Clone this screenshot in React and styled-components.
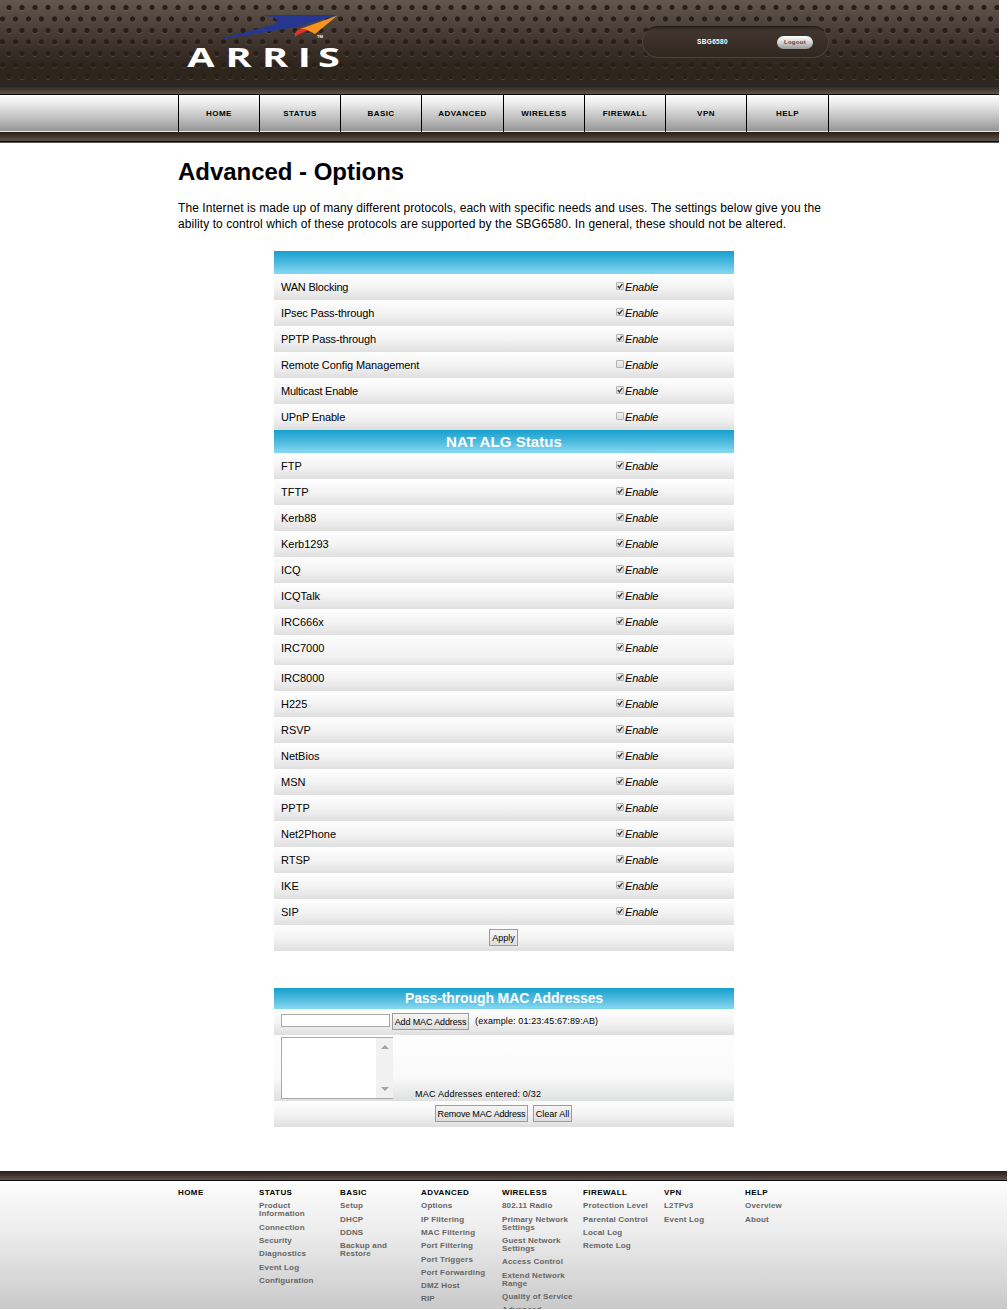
import React from "react";
import styled, { createGlobalStyle } from "styled-components";

const GlobalStyle = createGlobalStyle`
  *, *::before, *::after { box-sizing: border-box; }
  body { margin: 0; background: #fff; color: #000; font-family: "Liberation Sans", Arial, sans-serif; }
`;

const Page = styled.div`
  width: 1008px;
  height: 1310px;
  overflow: hidden;
`;

const Header = styled.header`
  width: 999px;
`;

const Banner = styled.div`
  height: 84px;
  padding: 0 170px 0 178px;
  display: flex;
  justify-content: space-between;
  background:
    radial-gradient(circle at 9px 7.5px, #271f18 2.2px, rgba(39, 31, 24, 0) 3px) 0 0 / 13px 23px,
    radial-gradient(circle at 2.5px 19px, #271f18 2.2px, rgba(39, 31, 24, 0) 3px) 0 0 / 13px 23px,
    radial-gradient(circle at 9px 8.5px, rgba(104, 92, 80, 0.5) 2.1px, rgba(104, 92, 80, 0) 3px) 0 0 / 13px 23px,
    radial-gradient(circle at 2.5px 20px, rgba(104, 92, 80, 0.5) 2.1px, rgba(104, 92, 80, 0) 3px) 0 0 / 13px 23px,
    linear-gradient(#61574e 0, #4f453e 22px, #3a3029 48px, #2e251d 66px, #2e251e 84px);
`;

const Band = styled.div`
  height: ${(p) => p.$height}px;
  background: linear-gradient(#261e17, #3c332c 40%, #5e544b);
  border-top: ${(p) => (p.$topLine ? `1px solid ${p.$topLine}` : "0")};
  border-bottom: 1px solid #0c0908;
`;

const HeaderEdge = styled.div`
  height: 1px;
  background: #55565a;
`;

const Logo = styled.svg`
  display: block;
  width: 170px;
  height: 80px;
`;

const StatusPill = styled.div`
  margin-top: 26px;
  width: 187px;
  height: 32px;
  padding: 0 15px 0 54px;
  display: flex;
  align-items: center;
  justify-content: space-between;
  border-radius: 16px;
  border: 1px solid #4d433a;
  border-top-color: #221b15;
  background: linear-gradient(#332a24, #40362f 15%, #30271f);
`;

const Model = styled.span`
  color: #fff;
  font-size: 6.5px;
  font-weight: bold;
  letter-spacing: 0.35px;
  line-height: 8px;
`;

const Logout = styled.button`
  width: 36px;
  height: 13px;
  padding: 0;
  border: 0;
  border-radius: 7px;
  background: linear-gradient(#fff, #d8d8d8 45%, #999);
  color: #60452c;
  font: bold 6px/13px "Liberation Sans", Arial, sans-serif;
  letter-spacing: 0.3px;
`;

const Nav = styled.nav`
  height: 37px;
  padding-left: 178px;
  display: flex;
  background: linear-gradient(#fdfdfd, #e9e9e9 25%, #c8c8c8 55%, #969696 97%, #e8e8e3 97.5%);
`;

const NavItem = styled.a`
  width: ${(p) => p.$width}px;
  border-left: 1px solid #000;
  text-align: center;
  font-size: 8px;
  font-weight: bold;
  line-height: 37px;
  letter-spacing: 0.45px;
`;

const NavEnd = styled.span`
  width: 1px;
  background: #000;
`;

const Main = styled.main`
  height: 1028px;
  padding: 15px 178px 0;
`;

const Title = styled.h1`
  margin: 0;
  font-size: 24px;
  line-height: 28px;
  font-weight: bold;
  letter-spacing: -0.03px;
`;

const Intro = styled.p`
  margin: 14px -10px 0 0;
  font-size: 12px;
  line-height: 16px;
  white-space: nowrap;
`;

const IntroLine = styled.span`
  display: block;
  letter-spacing: ${(p) => p.$spacing}px;
`;

const Panel = styled.section`
  width: 460px;
  margin: ${(p) => p.$top}px 0 0 96px;
`;

const PanelHead = styled.h2`
  margin: 0;
  height: ${(p) => p.$height}px;
  background: linear-gradient(#16a0cd, #4cb9de 50%, #80d5ef 92%);
  color: #fff;
  text-align: center;
  font-size: ${(p) => p.$size}px;
  line-height: ${(p) => p.$height}px;
  letter-spacing: ${(p) => p.$spacing || 0}px;
`;

const Row = styled.div`
  height: ${(p) => p.$height || 26}px;
  padding: 0 ${(p) => (p.$center ? 8 : 7)}px 0 7px;
  display: flex;
  align-items: center;
  justify-content: ${(p) => (p.$center ? "center" : "flex-start")};
  gap: ${(p) => p.$gap || 0}px;
  background: linear-gradient(#fefefe, #f4f4f4 50%, #dfdfdf);
`;

const SplitRow = styled(Row)`
  padding-bottom: 4px;
  background:
    linear-gradient(#f4f4f4, #dfe1e0) 0 21px / 100% 9px no-repeat,
    linear-gradient(#fefefe, #f1f1f1) 0 0 / 100% 21px no-repeat;
`;

const RowLabel = styled.span`
  width: 335px;
  font-size: 11px;
  line-height: 26px;
  letter-spacing: ${(p) => p.$spacing}px;
`;

const Toggle = styled.label`
  display: flex;
  align-items: center;
  gap: 1px;
  font-size: 11px;
  line-height: 26px;
  font-style: italic;
  letter-spacing: -0.17px;
`;

const Box = styled.span`
  width: 8px;
  height: 8px;
  margin-top: -2px;
  border: 1px solid #b5b5b5;
  border-radius: 1px;
  background: linear-gradient(#f0f0f0, #dedede);
  display: flex;
`;

const Tick = styled.svg`
  width: 6px;
  height: 6px;
  overflow: visible;
`;

const Button = styled.button`
  width: ${(p) => p.$width}px;
  height: 17px;
  margin-bottom: 1px;
  padding: 1px 0 0;
  border: 1px solid #9c9c9c;
  border-radius: 0;
  background: linear-gradient(#f6f6f6, #dddddd);
  color: #000;
  font: 9px/14px "Liberation Sans", Arial, sans-serif;
  letter-spacing: ${(p) => p.$spacing || 0}px;
  white-space: nowrap;
`;

const MacInput = styled.input`
  width: 109px;
  height: 13px;
  padding: 0 2px;
  border: 1px solid #a9a9a9;
  background: #fff;
  margin-bottom: 3px;
`;

const Note = styled.span`
  font-size: 9px;
  line-height: 12px;
  letter-spacing: ${(p) => p.$spacing}px;
  margin-left: ${(p) => p.$left}px;
  margin-bottom: ${(p) => p.$bottom}px;
  white-space: nowrap;
`;

const ListRow = styled(Row)`
  align-items: flex-end;
  padding-bottom: 2px;
  background: linear-gradient(#fefefe, #f9f9f9 65%, #dfe0e0);
`;

const MacList = styled.div`
  width: 112px;
  height: 62px;
  display: flex;
  justify-content: flex-end;
  border: 1px solid #a9a9a9;
  border-right: 0;
  background: #fff;
`;

const ScrollTrack = styled.div`
  width: 17px;
  display: flex;
  flex-direction: column;
  align-items: center;
  justify-content: space-between;
  padding: 7px 0;
  background: #f1f1f1;
`;

const Arrow = styled.i`
  border: 4px solid transparent;
  border-top: ${(p) => (p.$up ? "0" : "4px solid #a3a3a3")};
  border-bottom: ${(p) => (p.$up ? "4px solid #a3a3a3" : "0")};
`;

const Footer = styled.footer`
  width: 1007px;
  height: 138px;
  overflow: hidden;
  background: linear-gradient(#fdfdfd 10px, #ececec 45%, #c9c9c9);
`;

const SiteMap = styled.div`
  display: flex;
  padding: 8.4px 0 0 178px;
`;

const Column = styled.div`
  width: 81px;
  font-size: 8px;
  font-weight: bold;
  line-height: 8px;
  white-space: nowrap;
`;

const ColumnTitle = styled.div`
  height: 13px;
  letter-spacing: 0.42px;
`;

const ColumnLink = styled.a`
  display: block;
  margin-bottom: 5.3px;
  color: #666;
  letter-spacing: 0.17px;
  white-space: pre-line;
`;

const navItems = [
  ["HOME", 81], ["STATUS", 81], ["BASIC", 81], ["ADVANCED", 82],
  ["WIRELESS", 81], ["FIREWALL", 81], ["VPN", 81], ["HELP", 82],
];

const options = [
  ["WAN Blocking", true, -0.22],
  ["IPsec Pass-through", true, -0.16],
  ["PPTP Pass-through", true, -0.12],
  ["Remote Config Management", false, -0.1],
  ["Multicast Enable", true, -0.24],
  ["UPnP Enable", false, -0.16],
];

const algs = [
  "FTP", "TFTP", "Kerb88", "Kerb1293", "ICQ", "ICQTalk", "IRC666x", "IRC7000", "IRC8000",
  "H225", "RSVP", "NetBios", "MSN", "PPTP", "Net2Phone", "RTSP", "IKE", "SIP",
];

const siteMap = [
  ["HOME", []],
  ["STATUS", ["Product\nInformation", "Connection", "Security", "Diagnostics", "Event Log", "Configuration"]],
  ["BASIC", ["Setup", "DHCP", "DDNS", "Backup and\nRestore"]],
  ["ADVANCED", ["Options", "IP Filtering", "MAC Filtering", "Port Filtering", "Port Triggers", "Port Forwarding", "DMZ Host", "RIP"]],
  ["WIRELESS", ["802.11 Radio", "Primary Network\nSettings", "Guest Network\nSettings", "Access Control", "Extend Network\nRange", "Quality of Service", "Advanced"]],
  ["FIREWALL", ["Protection Level", "Parental Control", "Local Log", "Remote Log"]],
  ["VPN", ["L2TPv3", "Event Log"]],
  ["HELP", ["Overview", "About"]],
];

function EnableToggle({ checked }) {
  return (
    <Toggle>
      <Box>
        {checked && (
          <Tick viewBox="0 0 6 6">
            <path d="M0.8 3.1 L2.4 4.8 L5.4 0.8" fill="none" stroke="#3c3c3c" strokeWidth="1.4" />
          </Tick>
        )}
      </Box>
      Enable
    </Toggle>
  );
}

function OptionRow({ label, checked, split, spacing = 0 }) {
  const Wrapper = split ? SplitRow : Row;
  return (
    <Wrapper $height={split ? 30 : 26}>
      <RowLabel $spacing={spacing}>{label}</RowLabel>
      <EnableToggle checked={checked} />
    </Wrapper>
  );
}

function ArrisLogo() {
  return (
    <Logo viewBox="178 0 170 80" role="img" aria-label="ARRIS">
      <path d="M261 15 H338 L299 26.6 L223 39.2 L223 38 L270 25.6 Q282 21.5 275 18.6 Q270 16 261 15 Z" fill="#27378f" />
      <path d="M337.5 15.6 L315 34 Q309 30 300 29 Z" fill="#f7941e" />
      <path d="M295 37 Q294 30 300.5 29 Q306 28.5 309 30.5 Q301 32 295 37 Z" fill="#e33127" />
      <text x="317" y="38" fill="#fff" fontFamily="Liberation Sans, sans-serif" fontWeight="bold" fontSize="4.2">TM</text>
      <text
        transform="scale(1.48 1)"
        x="126.6 152.4 177.1 201.2 214.8"
        y="67.3"
        fill="#fff"
        fontFamily="Open Sans, sans-serif"
        fontWeight="700"
        fontSize="26.8"
      >
        ARRIS
      </text>
    </Logo>
  );
}

export default function App() {
  return (
    <Page>
      <GlobalStyle />
      <Header>
        <Banner>
          <ArrisLogo />
          <StatusPill>
            <Model>SBG6580</Model>
            <Logout>Logout</Logout>
          </StatusPill>
        </Banner>
        <Band $height={11} $topLine="#2b2d31" />
        <Nav>
          {navItems.map(([name, width]) => (
            <NavItem key={name} $width={width}>{name}</NavItem>
          ))}
          <NavEnd />
        </Nav>
        <Band $height={10} />
        <HeaderEdge />
      </Header>

      <Main>
        <Title>Advanced - Options</Title>
        <Intro>
          <IntroLine $spacing={0.07}>
            The Internet is made up of many different protocols, each with specific needs and uses. The settings below give you the
          </IntroLine>
          <IntroLine $spacing={0.08}>
            ability to control which of these protocols are supported by the SBG6580. In general, these should not be altered.
          </IntroLine>
        </Intro>

        <Panel $top={19}>
          <PanelHead $height={23} $size={15} />
          {options.map(([label, checked, spacing]) => (
            <OptionRow key={label} label={label} checked={checked} spacing={spacing} />
          ))}
          <PanelHead $height={23} $size={15} $spacing={0.07}>NAT ALG Status</PanelHead>
          {algs.map((label) => (
            <OptionRow key={label} label={label} checked split={label === "IRC7000"} />
          ))}
          <Row $center>
            <Button $width={29}>Apply</Button>
          </Row>
        </Panel>

        <Panel $top={37}>
          <PanelHead $height={21} $size={14} $spacing={-0.11}>Pass-through MAC Addresses</PanelHead>
          <Row $gap={2}>
            <MacInput aria-label="MAC address" />
            <Button $width={77} $spacing={-0.12}>Add MAC Address</Button>
            <Note $left={4} $bottom={2} $spacing={0.13}>(example: 01:23:45:67:89:AB)</Note>
          </Row>
          <ListRow $height={66}>
            <MacList>
              <ScrollTrack>
                <Arrow $up />
                <Arrow />
              </ScrollTrack>
            </MacList>
            <Note $left={22} $bottom={-1} $spacing={0.23}>MAC Addresses entered: 0/32</Note>
          </ListRow>
          <Row $center $gap={5}>
            <Button $width={93} $spacing={-0.18}>Remove MAC Address</Button>
            <Button $width={39}>Clear All</Button>
          </Row>
        </Panel>
      </Main>

      <Footer>
        <Band $height={10} />
        <SiteMap>
          {siteMap.map(([title, links]) => (
            <Column key={title}>
              <ColumnTitle>{title}</ColumnTitle>
              {links.map((link) => (
                <ColumnLink key={link}>{link}</ColumnLink>
              ))}
            </Column>
          ))}
        </SiteMap>
      </Footer>
    </Page>
  );
}
